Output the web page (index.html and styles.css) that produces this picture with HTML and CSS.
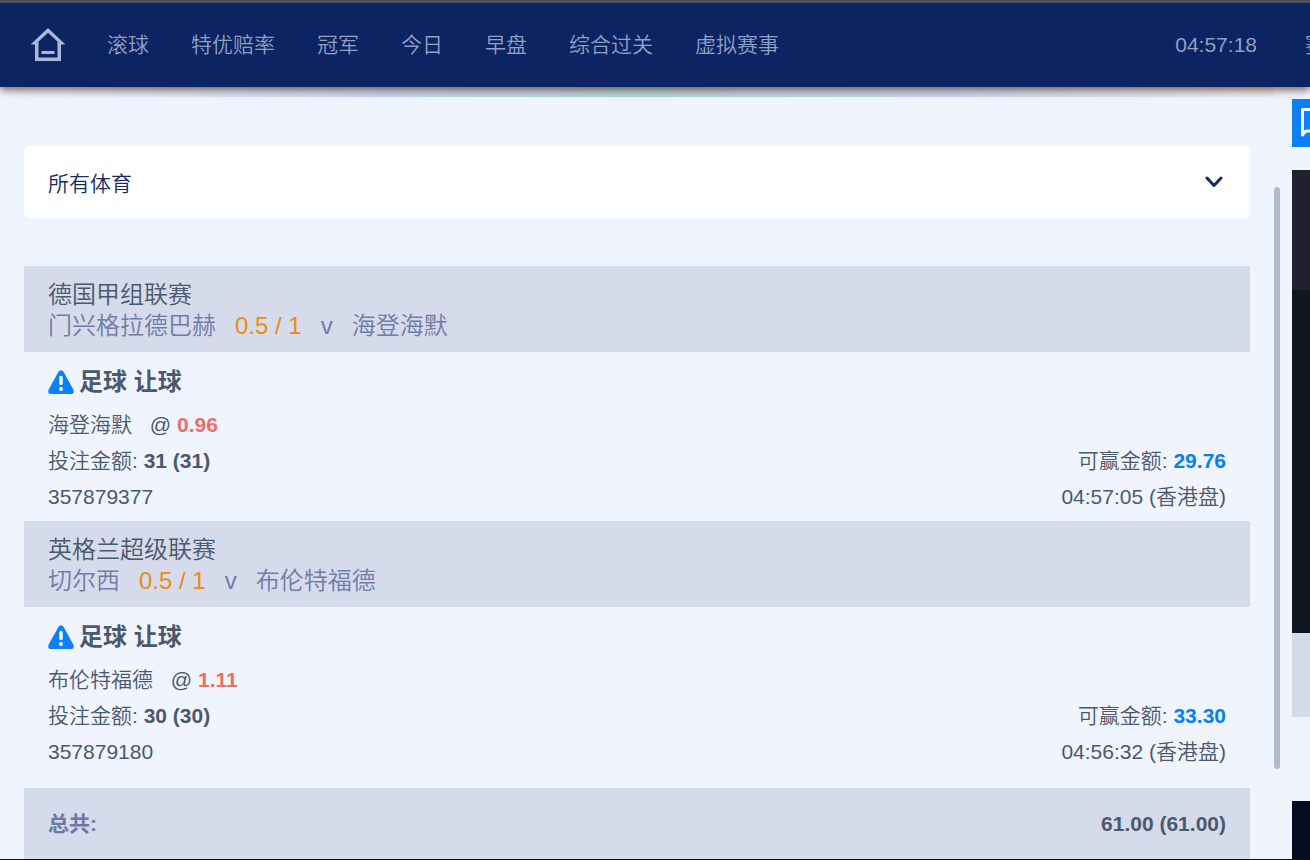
FILE: index.html
```html
<!DOCTYPE html>
<html lang="zh-CN">
<head>
<meta charset="utf-8">
<meta name="viewport" content="width=device-width, initial-scale=1">
<title>注单</title>
<link rel="stylesheet" href="styles.css">
</head>
<body>
<div class="page">
  <header class="header">
    <a class="home" href="#" aria-label="首页">
      <svg viewBox="0 0 36 36" width="36" height="36" fill="none" stroke="currentColor" stroke-width="3">
        <path d="M0.500 17.500L18 1L35.500 17.500H31V34H5V17.500ZM8.500 14.500V30.500H27.500V14.500L18 5.800Z" fill="currentColor" fill-rule="evenodd" stroke="none"/>
        <path d="M11.500 25.500H24.500"/>
      </svg>
    </a>
    <nav class="nav">
      <a href="#">滚球</a>
      <a href="#">特优赔率</a>
      <a href="#">冠军</a>
      <a href="#">今日</a>
      <a href="#">早盘</a>
      <a href="#">综合过关</a>
      <a href="#">虚拟赛事</a>
    </nav>
    <time class="clock">04:57:18</time>
    <a class="results" href="#">赛果</a>
  </header>

  <div class="content">
    <div class="banner"></div>
    <main class="main">
      <div class="filter">
        <select class="filter-select" aria-label="体育">
          <option>所有体育</option>
        </select>
        <svg class="chevron" viewBox="0 0 18 12" width="18" height="12" fill="none" stroke="currentColor" stroke-width="3" stroke-linecap="round" stroke-linejoin="round"><path d="M2 2L9 9.500L16 2"/></svg>
      </div>

      <section class="bet">
        <div class="match">
          <div class="league">德国甲组联赛</div>
          <div class="teams"><span>门兴格拉德巴赫</span><span class="handicap">0.5 / 1</span><span>v</span><span>海登海默</span></div>
        </div>
        <div class="details">
          <h2 class="market">
            <svg viewBox="0 0 26 24" width="26" height="24"><path d="M10.500 1.800Q13 -1.500 15.500 1.800L25.300 19.500Q27 24 22.500 24H3.500Q-1 24 .7 19.500Z" fill="#0a80fa"/><path d="M13 7.500V13.500" stroke="#fff" stroke-width="3.400" stroke-linecap="round"/><circle cx="13" cy="19" r="1.900" fill="#fff"/></svg>
            足球 让球
          </h2>
          <div class="row"><span class="pick">海登海默 <span class="at">@ <b class="odds">0.96</b></span></span></div>
          <div class="row"><span>投注金额: <b>31 (31)</b></span><span>可赢金额: <b class="win">29.76</b></span></div>
          <div class="row"><span>357879377</span><span>04:57:05 (香港盘)</span></div>
        </div>
      </section>

      <section class="bet">
        <div class="match">
          <div class="league">英格兰超级联赛</div>
          <div class="teams"><span>切尔西</span><span class="handicap">0.5 / 1</span><span>v</span><span>布伦特福德</span></div>
        </div>
        <div class="details">
          <h2 class="market">
            <svg viewBox="0 0 26 24" width="26" height="24"><path d="M10.500 1.800Q13 -1.500 15.500 1.800L25.300 19.500Q27 24 22.500 24H3.500Q-1 24 .7 19.500Z" fill="#0a80fa"/><path d="M13 7.500V13.500" stroke="#fff" stroke-width="3.400" stroke-linecap="round"/><circle cx="13" cy="19" r="1.900" fill="#fff"/></svg>
            足球 让球
          </h2>
          <div class="row"><span class="pick">布伦特福德 <span class="at">@ <b class="odds">1.11</b></span></span></div>
          <div class="row"><span>投注金额: <b>30 (30)</b></span><span>可赢金额: <b class="win">33.30</b></span></div>
          <div class="row"><span>357879180</span><span>04:56:32 (香港盘)</span></div>
        </div>
      </section>

      <div class="total"><b class="total-label">总共:</b><b>61.00 (61.00)</b></div>
    </main>

    <div class="scroll"><div class="thumb"></div></div>

    <aside class="side">
      <button class="chat" aria-label="聊天">
        <svg viewBox="0 0 32 32" width="32" height="32" fill="none" stroke="#fff" stroke-width="3"><path d="M2.500 28V2.500H29.500V24H6Z" stroke-linejoin="round"/></svg>
      </button>
      <div class="video"><div class="video-bar"></div></div>
      <div class="video-controls"></div>
      <div class="panel"></div>
    </aside>
  </div>
</div>
</body>
</html>
```
FILE: styles.css
```css
* { box-sizing: border-box; }

body {
  margin: 0;
  background: #f0f4ff;
  color: #4a596d;
  font: 350 21px/36px "Liberation Sans", "Noto Sans CJK SC", sans-serif;
}

a { color: inherit; text-decoration: none; }

b { font-weight: 700; }

.page {
  display: flex;
  flex-direction: column;
  height: 100vh;
  overflow: hidden;
  border-bottom: 1px solid #11151f;
}

.header {
  display: flex;
  flex: none;
  align-items: center;
  height: 87px;
  padding-left: 30px;
  border-top: 3px solid #55505f;
  background: #0c2461;
  color: #929fc6;
  box-shadow: 0 3px 8px rgba(90, 60, 50, .8);
  position: relative;
  z-index: 1;
}

.home { display: flex; color: #a9b8d6; }

.nav { display: flex; gap: 42px; margin-left: 41px; }

.nav a, .clock, .results { white-space: nowrap; }

.clock { margin-left: auto; }

.results { width: 5px; margin-left: 48px; overflow: hidden; }

.content {
  display: flex;
  flex: 1;
  min-height: 0;
  position: relative;
}

.banner {
  position: absolute;
  top: 0;
  left: 0;
  right: 36px;
  height: 10px;
  background: linear-gradient(90deg, #f0f4ff, #c5daf2 30%, #b5d5df 50%, #c6d9f2 75%, #efeaea);
}

.main {
  flex: 1;
  min-width: 0;
  padding: 59px 24px 0;
}

.filter { position: relative; margin-bottom: 48px; }

.filter-select {
  display: block;
  width: 100%;
  height: 72px;
  padding: 3px 24px 0;
  border: 0;
  border-radius: 5px;
  background: #fff;
  color: #172b63;
  font: inherit;
  appearance: none;
}

.chevron {
  position: absolute;
  top: 30px;
  right: 27px;
  color: #172b63;
  pointer-events: none;
}

.match {
  padding: 13px 24px 11px;
  background: #d5dbea;
  font-size: 24px;
  line-height: 31px;
}

.teams { display: flex; gap: 19px; color: #707ba8; }

.handicap { color: #ef8a0c; }

.details { padding: 12px 24px 6px; }

.market {
  display: flex;
  align-items: center;
  gap: 5px;
  margin: 0 0 7px;
  font-size: 24px;
  line-height: 36px;
}

.row { display: flex; justify-content: space-between; }

.at { margin-left: 12px; }

.odds { color: #ee6e62; }

.win { color: #0a80ee; }

.total {
  display: flex;
  justify-content: space-between;
  margin-top: 12px;
  padding: 18px 24px;
  background: #d5dbea;
}

.total-label { color: #6c78a5; }

.scroll { width: 6px; padding-top: 100px; }

.thumb {
  height: 582px;
  border-radius: 3px;
  background: #b4bac8;
}

.side {
  width: 18px;
  margin-left: 12px;
  padding-top: 12px;
  overflow: hidden;
}

.chat {
  display: block;
  width: 48px;
  height: 48px;
  padding: 8px;
  border: 0;
  background: #0a80fa;
}

.chat svg { display: block; }

.video {
  height: 463px;
  margin-top: 23px;
  background: #11151f;
}

.video-bar { height: 120px; background: #211f30; }

.video-controls { height: 84px; background: #d5dbea; }

.panel {
  height: 60px;
  margin-top: 84px;
  background: #070b1f;
}
```
